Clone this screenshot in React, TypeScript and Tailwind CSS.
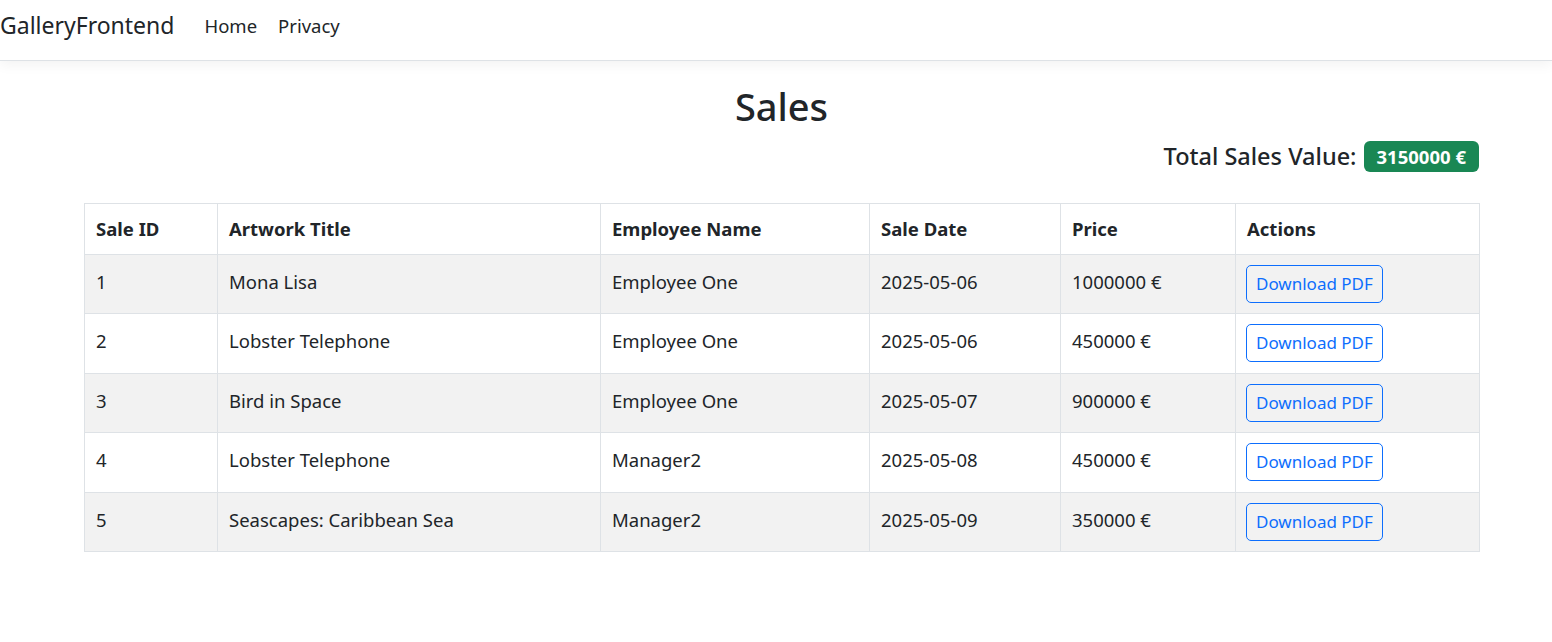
const sales = [
  { id: 1, title: "Mona Lisa", employee: "Employee One", date: "2025-05-06", price: 1000000 },
  { id: 2, title: "Lobster Telephone", employee: "Employee One", date: "2025-05-06", price: 450000 },
  { id: 3, title: "Bird in Space", employee: "Employee One", date: "2025-05-07", price: 900000 },
  { id: 4, title: "Lobster Telephone", employee: "Manager2", date: "2025-05-08", price: 450000 },
  { id: 5, title: "Seascapes: Caribbean Sea", employee: "Manager2", date: "2025-05-09", price: 350000 },
];

const headers = ["Sale ID", "Artwork Title", "Employee Name", "Sale Date", "Price", "Actions"];
const widths = ["w-[133px]", "w-[383px]", "w-[269px]", "w-[191px]", "w-[175px]", "w-[244px]"];

export default function App() {
  const total = sales.reduce((sum, s) => sum + s.price, 0);

  return (
    <div className="min-h-screen bg-white text-[#212529] font-['Noto_Sans',sans-serif] text-[18.5px]">
      {/* Navbar */}
      <nav className="h-[61px] pb-[9px] flex items-center border-b border-[#dee2e6] shadow-[0_4px_12px_rgba(0,0,0,0.05)]">
        <a className="text-[23px] leading-none pr-[30px]">GalleryFrontend</a>
        <div className="flex items-center gap-[21px] text-[18.5px]">
          <a>Home</a>
          <a>Privacy</a>
        </div>
      </nav>

      <main className="pl-[84px] pr-[73px] pt-[23px]">
        <h1 className="text-center text-[38px] font-medium leading-[1.2]">Sales</h1>

        <div className="flex justify-end items-center gap-[7px] mt-[11px]">
          <h4 className="text-[23.5px] font-medium leading-[1.2]">Total Sales Value:</h4>
          <span className="bg-[#198754] text-white font-bold text-[18.5px] leading-[19px] px-[13px] py-[6px] rounded-[6px]">
            {total} €
          </span>
        </div>

        <table className="table-fixed w-[1395px] mt-[31px] border-collapse border border-[#dee2e6]">
          <thead>
            <tr className="h-[51px]">
              {headers.map((h, i) => (
                <th key={h} className={`${widths[i]} border border-[#dee2e6] text-left font-bold px-[11px] leading-[24px] align-middle`}>
                  {h}
                </th>
              ))}
            </tr>
          </thead>
          <tbody>
            {sales.map((s, i) => (
              <tr key={s.id} className={i % 2 === 0 ? "h-[59.5px] bg-[#f2f2f2]" : "h-[59.5px] bg-white"}>
                <td className="border border-[#dee2e6] px-[11px] pt-[15px] leading-[24px] align-top">{s.id}</td>
                <td className="border border-[#dee2e6] px-[11px] pt-[15px] leading-[24px] align-top">{s.title}</td>
                <td className="border border-[#dee2e6] px-[11px] pt-[15px] leading-[24px] align-top">{s.employee}</td>
                <td className="border border-[#dee2e6] px-[11px] pt-[15px] leading-[24px] align-top">{s.date}</td>
                <td className="border border-[#dee2e6] px-[11px] pt-[15px] leading-[24px] align-top">{s.price} €</td>
                <td className="border border-[#dee2e6] px-[10px] pt-[10px] align-top">
                  <button className="h-[38px] px-[9px] border border-[#0d6efd] text-[#0d6efd] rounded-[5px] text-[17px]">
                    Download PDF
                  </button>
                </td>
              </tr>
            ))}
          </tbody>
        </table>
      </main>
    </div>
  );
}
